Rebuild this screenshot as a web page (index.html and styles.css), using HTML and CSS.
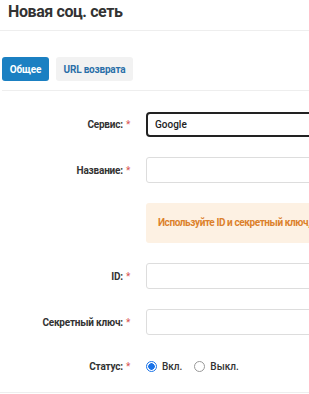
FILE: index.html
```html
<!DOCTYPE html>
<html lang="ru">
<head>
  <meta charset="UTF-8">
  <meta name="viewport" content="width=device-width, initial-scale=1.0">
  <title>Новая соц. сеть</title>
  <link rel="stylesheet" href="styles.css">
</head>
<body>

<div id="page">
  <div class="page-header">
    <h1>Новая соц. сеть</h1>
  </div>

  <div class="tabs">
    <button class="tab active">Общее</button>
    <button class="tab">URL возврата</button>
  </div>

  <form class="form">
    <div class="row">
      <label class="label">Сервис:<span class="req">*</span></label>
      <div class="field"><input class="input focus" type="text" value="Google"></div>
    </div>

    <div class="row">
      <label class="label">Название:<span class="req">*</span></label>
      <div class="field"><input class="input" type="text"></div>
    </div>

    <div class="row">
      <div class="label"></div>
      <div class="field"><div class="alert">Используйте ID и секретный ключ, полученные при регистрации приложения</div></div>
    </div>

    <div class="row">
      <label class="label">ID:<span class="req">*</span></label>
      <div class="field"><input class="input" type="text"></div>
    </div>

    <div class="row">
      <label class="label">Секретный ключ:<span class="req">*</span></label>
      <div class="field"><input class="input" type="text"></div>
    </div>

    <div class="row status">
      <label class="label">Статус:<span class="req">*</span></label>
      <div class="field radios">
        <label class="radio"><span class="dot checked"></span>Вкл.</label>
        <label class="radio"><span class="dot"></span>Выкл.</label>
      </div>
    </div>
  </form>
</div>

</body>
</html>
```

FILE: styles.css
```css
html, body {
  margin: 0;
  padding: 0;
  background: #fff;
  overflow: hidden;
}

body {
  font-family: Roboto, "Liberation Sans", sans-serif;
  color: #333;
}

#page {
  width: 309px;
  height: 394px;
  overflow: hidden;
}

.page-header {
  height: 30px;
  border-bottom: 1px solid #eee;
  padding: 0 8px;
}

.page-header h1 {
  margin: 0;
  padding-top: 2px;
  font-size: 16px;
  font-weight: 700;
  letter-spacing: -0.4px;
  color: #333;
  line-height: 20px;
}

.tabs {
  display: flex;
  gap: 7px;
  margin: 26px 0 0 2px;
  padding-bottom: 9px;
  border-bottom: 1px solid #eee;
}

.tab {
  height: 24px;
  padding: 0;
  border: none;
  border-radius: 3px;
  background: #f2f2f2;
  color: #2a6fa8;
  font-family: inherit;
  font-size: 10px;
  font-weight: 700;
  letter-spacing: -0.2px;
  cursor: pointer;
  width: 77px;
}

.tab.active {
  background: #1b80c2;
  color: #fff;
  width: 47px;
}

.form {
  display: flex;
  flex-direction: column;
  gap: 20px;
  padding-top: 21px;
  padding-bottom: 20px;
  border-bottom: 1px solid #eee;
}

.row {
  display: flex;
  align-items: center;
  gap: 16px;
}

.label {
  width: 130px;
  flex: none;
  text-align: right;
  font-size: 10px;
  font-weight: 700;
  letter-spacing: -0.2px;
  color: #333;
}

.req {
  color: #d9534f;
  margin-left: 3px;
  font-weight: 400;
}

.field {
  flex: none;
  width: 220px;
}

.input {
  display: block;
  box-sizing: border-box;
  width: 100%;
  height: 26px;
  border: 1px solid #ddd;
  border-radius: 3px;
  padding: 0 8px;
  font-family: inherit;
  font-size: 10px;
  font-weight: 500;
  color: #222;
  outline: none;
}

.input.focus {
  border: 2px solid #222;
  border-radius: 4px;
  padding: 0 7px;
  height: 25px;
}

.alert {
  height: 40px;
  box-sizing: border-box;
  padding: 0 12px;
  background: #fdf1e3;
  border-radius: 3px;
  color: #dc812c;
  font-size: 10px;
  font-weight: 700;
  letter-spacing: -0.4px;
  line-height: 40px;
  white-space: nowrap;
}

.status {
  margin-top: 6px;
}

.radios {
  display: flex;
  align-items: center;
  gap: 12px;
}

.radio {
  display: flex;
  align-items: center;
  gap: 5px;
  font-size: 10px;
  font-weight: 500;
  color: #333;
}

.dot {
  box-sizing: border-box;
  width: 11px;
  height: 11px;
  border-radius: 50%;
  border: 1px solid #999;
  background: #fff;
}

.dot.checked {
  border: 1px solid #1a73e8;
  background: radial-gradient(circle, #1a73e8 0 3px, #fff 3.5px);
}
```
